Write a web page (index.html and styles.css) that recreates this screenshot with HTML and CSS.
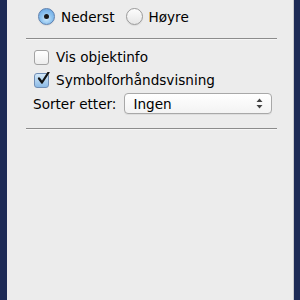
FILE: index.html
```html
<!DOCTYPE html>
<html>
<head>
<meta charset="utf-8">
<link rel="stylesheet" href="styles.css">
</head>
<body>
<div class="screen">
  <div class="panel">
    <div class="radios">
      <label class="radio-item"><span class="radio on"><span class="dot"></span></span><span class="lbl">Nederst</span></label>
      <label class="radio-item"><span class="radio"></span><span class="lbl">Høyre</span></label>
    </div>
    <div class="sep"></div>
    <div class="options">
      <label class="check-item"><span class="check"></span><span class="lbl">Vis objektinfo</span></label>
      <label class="check-item"><span class="check on"><svg viewBox="0 0 14 14" width="14" height="14"><path d="M3 6.5 L6 10.5 L12.5 0.5" fill="none" stroke="#111" stroke-width="2.2" stroke-linecap="round" stroke-linejoin="round"/></svg></span><span class="lbl">Symbolforhåndsvisning</span></label>
      <div class="sort-row">
        <span class="lbl">Sorter etter:</span>
        <div class="popup"><span class="lbl">Ingen</span><svg class="arrows" viewBox="0 0 7 11" width="7" height="11"><path d="M3.5 0.5 L6.5 4 L0.5 4 Z M3.5 10.5 L6.5 7 L0.5 7 Z" fill="#444"/></svg></div>
      </div>
    </div>
    <div class="sep sep2"></div>
  </div>
</div>
</body>
</html>
```
FILE: styles.css
```css
html, body {
  margin: 0;
  padding: 0;
}
body {
  width: 300px;
  height: 300px;
  overflow: hidden;
  font-family: "DejaVu Sans", "Liberation Sans", sans-serif;
  font-size: 13.6px;
  color: #000;
}
.screen {
  display: flex;
  width: 300px;
  height: 300px;
  background: #1d2a55;
}
.panel {
  margin-left: 7px;
  width: 287px;
  height: 300px;
  background: #ececec;
  box-shadow: inset -1px 0 0 #c9c9cc;
  box-sizing: border-box;
  padding-top: 8px;
}
.radios {
  display: flex;
  align-items: center;
  gap: 11px;
  padding-left: 31px;
  height: 17px;
}
.radio-item, .check-item {
  display: flex;
  align-items: center;
}
.radio {
  width: 15px;
  height: 15px;
  border-radius: 50%;
  border: 1px solid #9a9a9a;
  background: linear-gradient(#fdfdfd, #e6e6e6);
  display: flex;
  align-items: center;
  justify-content: center;
  margin-right: 6px;
  box-shadow: 0 1px 1px rgba(0,0,0,0.08);
}
.radio.on {
  border-color: #5c7fae;
  background: radial-gradient(circle at 50% 65%, #cfe9fb 0%, #8ec3ef 45%, #5d9fe0 100%);
}
.radio .dot {
  width: 5px;
  height: 5px;
  border-radius: 50%;
  background: #1a1a1a;
}
.sep {
  margin: 13px 0 0 19px;
  width: 251px;
  height: 1px;
  background: #8c8c8c;
  box-shadow: 0 1px 0 #f6f6f6;
}
.options {
  padding-left: 26px;
  padding-top: 11px;
  display: flex;
  flex-direction: column;
}
.check-item {
  padding-left: 1px;
  height: 14px;
  margin-bottom: 9px;
}
.check {
  width: 13px;
  height: 13px;
  border: 1px solid #a3a3a3;
  border-radius: 3px;
  background: linear-gradient(#ffffff, #ededed);
  margin-right: 7px;
  position: relative;
  box-sizing: content-box;
}
.check.on {
  border-color: #6f8db5;
  background: linear-gradient(#d3e8f8, #8dbbe6);
}
.check svg {
  position: absolute;
  left: 1px;
  top: -2px;
}
.sort-row {
  display: flex;
  align-items: center;
  gap: 8px;
  margin-top: -3px;
}
.popup {
  width: 130px;
  height: 19px;
  border: 1px solid #a8a8a8;
  border-radius: 4px;
  background: linear-gradient(#ffffff, #f3f3f3);
  display: flex;
  align-items: center;
  justify-content: space-between;
  padding: 0 8px 0 8px;
  box-sizing: content-box;
  box-shadow: 0 1px 0 rgba(0,0,0,0.06);
}
.sep2 {
  margin-top: 14px;
}
```
